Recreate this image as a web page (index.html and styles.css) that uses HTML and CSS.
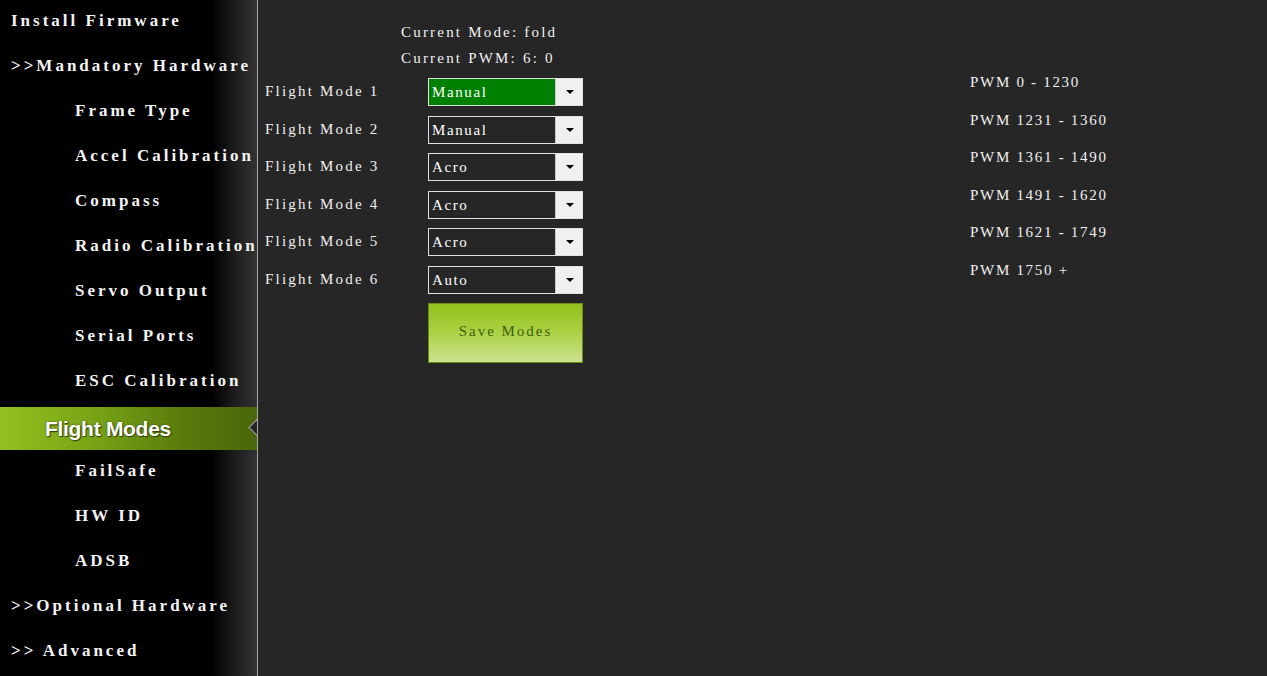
FILE: index.html
```
<!DOCTYPE html>
<html>
<head>
<meta charset="utf-8">
<link rel="stylesheet" href="styles.css">
</head>
<body>
<div class="app">
  <nav class="sidebar">
    <div class="item top">Install Firmware</div>
    <div class="item top">&gt;&gt;Mandatory Hardware</div>
    <div class="item sub">Frame Type</div>
    <div class="item sub">Accel Calibration</div>
    <div class="item sub">Compass</div>
    <div class="item sub">Radio Calibration</div>
    <div class="item sub">Servo Output</div>
    <div class="item sub">Serial Ports</div>
    <div class="item sub">ESC Calibration</div>
    <div class="item selected">Flight Modes</div>
    <div class="item sub">FailSafe</div>
    <div class="item sub">HW ID</div>
    <div class="item sub">ADSB</div>
    <div class="item top">&gt;&gt;Optional Hardware</div>
    <div class="item top">&gt;&gt; Advanced</div>
  </nav>
  <main class="main">
    <section class="form">
      <div class="status">
        <div>Current Mode: fold</div>
        <div>Current PWM: 6: 0</div>
      </div>
      <div class="rows">
        <div class="row"><span class="label">Flight Mode 1</span><div class="select active"><span class="value">Manual</span><span class="arrow"></span></div></div>
        <div class="row"><span class="label">Flight Mode 2</span><div class="select"><span class="value">Manual</span><span class="arrow"></span></div></div>
        <div class="row"><span class="label">Flight Mode 3</span><div class="select"><span class="value">Acro</span><span class="arrow"></span></div></div>
        <div class="row"><span class="label">Flight Mode 4</span><div class="select"><span class="value">Acro</span><span class="arrow"></span></div></div>
        <div class="row"><span class="label">Flight Mode 5</span><div class="select"><span class="value">Acro</span><span class="arrow"></span></div></div>
        <div class="row"><span class="label">Flight Mode 6</span><div class="select"><span class="value">Auto</span><span class="arrow"></span></div></div>
        <div class="row"><span class="label"></span><button class="save">Save Modes</button></div>
      </div>
    </section>
    <section class="pwm">
      <div>PWM 0 - 1230</div>
      <div>PWM 1231 - 1360</div>
      <div>PWM 1361 - 1490</div>
      <div>PWM 1491 - 1620</div>
      <div>PWM 1621 - 1749</div>
      <div>PWM 1750 +</div>
    </section>
  </main>
</div>
</body>
</html>
```
FILE: styles.css
```
html, body {
  margin: 0;
  padding: 0;
  background: #262626;
  height: 100%;
  overflow: hidden;
}
.app {
  display: flex;
  height: 676px;
  width: 1267px;
}
.sidebar {
  width: 257px;
  flex: none;
  background: linear-gradient(to right, #000 0, #000 212px, #1a1a1a 232px, #333 257px);
  border-right: 1px solid #a8a8a8;
  overflow: hidden;
  display: flex;
  flex-direction: column;
  margin-top: -2px;
  height: 678px;
}
.item {
  height: 45px;
  line-height: 45px;
  flex: none;
  font-family: "Liberation Serif", "Times New Roman", serif;
  font-weight: bold;
  font-size: 17px;
  letter-spacing: 3px;
  color: #f4f4f4;
  white-space: nowrap;
}
.item.top {
  padding-left: 11px;
}
.item.sub {
  padding-left: 75px;
}
.item.selected {
  position: relative;
  height: 43px;
  line-height: 43px;
  margin-top: 4px;
  margin-bottom: -2px;
  padding-left: 45px;
  font-family: "Liberation Sans", Arial, sans-serif;
  font-size: 21px;
  letter-spacing: -0.3px;
  color: #fff;
  text-shadow: 0 0 2px #3a5000, 1px 1px 1px #2c3c00;
  background: linear-gradient(to right, #93c01f 0, #7aa516 90px, #5a7c0c 180px, #4a660a 257px);
}
.item.selected::after {
  content: "";
  position: absolute;
  right: -7px;
  top: 14px;
  width: 12px;
  height: 12px;
  background: #262626;
  border-left: 1px solid #a8a8a8;
  border-bottom: 1px solid #a8a8a8;
  transform: rotate(45deg);
}
.main {
  flex: 1;
  display: flex;
  font-family: "Liberation Serif", "Times New Roman", serif;
  font-size: 15px;
  letter-spacing: 2.2px;
  color: #f0f0f0;
}
.form {
  padding-left: 7px;
  width: 320px;
  flex: none;
}
.status {
  padding-top: 19px;
  padding-left: 136px;
  line-height: 26px;
}
.rows {
  display: flex;
  flex-direction: column;
  gap: 9.5px;
  margin-top: 7px;
}
.row {
  display: flex;
  align-items: flex-start;
}
.label {
  width: 163px;
  flex: none;
  line-height: 26px;
}
.select {
  width: 155px;
  height: 28px;
  box-sizing: border-box;
  border: 1px solid #e0e0e0;
  display: flex;
  background: #262626;
}
.select.active .value {
  background: #008000;
}
.value {
  flex: 1;
  line-height: 26px;
  padding-left: 3px;
  color: #fff;
  letter-spacing: 1.6px;
}
.arrow {
  width: 26px;
  flex: none;
  background: #f0f0f0;
  border-left: 1px solid #c8c8c8;
  position: relative;
}
.arrow::after {
  content: "";
  position: absolute;
  left: 10px;
  top: 11px;
  border-left: 4px solid transparent;
  border-right: 4px solid transparent;
  border-top: 4px solid #000;
}
.save {
  width: 155px;
  height: 60px;
  box-sizing: border-box;
  border: 1px solid #6a8a20;
  background: linear-gradient(to bottom, #93c11e 0%, #a9d03f 45%, #cde291 100%);
  font-family: "Liberation Serif", "Times New Roman", serif;
  font-size: 15px;
  letter-spacing: 2px;
  color: #3f5f0c;
  padding: 0 0 4px 0;
  cursor: pointer;
}
.pwm {
  margin-left: 385px;
  padding-top: 64px;
  display: flex;
  flex-direction: column;
  letter-spacing: 1.7px;
}
.pwm div {
  height: 37.5px;
  line-height: 37.5px;
}
```
